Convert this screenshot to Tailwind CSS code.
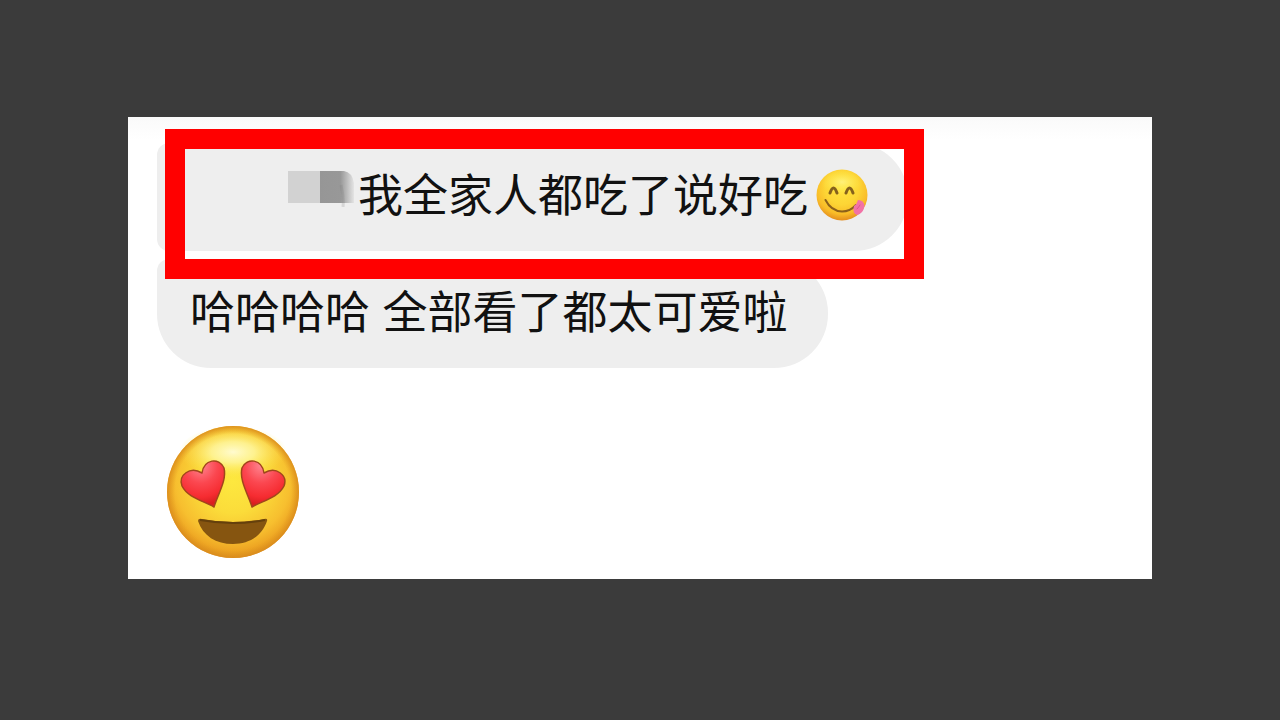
<!DOCTYPE html>
<html lang="zh">
<head>
  <meta charset="UTF-8">
  <meta name="viewport" content="width=device-width, initial-scale=1.0">
  <title>Chat</title>
  <script src="https://cdn.jsdelivr.net/npm/@tailwindcss/browser@4"></script>
</head>
<body class="bg-[#3b3b3b] min-h-screen pt-[117px] font-['Liberation_Sans','Noto_Sans_CJK_SC',sans-serif] text-[#111111]">

  <main class="w-4/5 mx-auto bg-white bg-linear-to-b from-[#fafafa] to-white to-5% pt-[26px] pb-5 pl-[29px]">

    <!-- Messages -->
    <div class="flex flex-col items-start gap-2 text-[45px] leading-[60px] whitespace-nowrap">

      <div class="relative flex items-center bg-[#eeeeee] rounded-l-xl rounded-r-[54px] h-[108px] pl-[131px] pr-10">
        <!-- Blurred name -->
        <svg class="w-[70px] h-9 mb-4" viewBox="0 0 70 36" aria-hidden="true">
          <defs>
            <linearGradient id="smudge" x1="0" x2="1">
              <stop offset="0" stop-color="#969696"/>
              <stop offset="0.6" stop-color="#989898"/>
              <stop offset="0.8" stop-color="#bdbdbd"/>
              <stop offset="1" stop-color="#e4e4e4"/>
            </linearGradient>
          </defs>
          <rect y="0" width="32" height="32" fill="#d2d2d2"/>
          <path d="M32 0h24q8 1 10 12v20H32z" fill="url(#smudge)"/>
          <path d="M53 14q3 12 2 22" fill="none" stroke="#777777" stroke-opacity="0.2" stroke-width="3"/>
        </svg>
        <p>我全家人都吃了说好吃</p>
        <svg class="w-[52px] h-[52px] ml-2 mb-1" viewBox="0 0 52 52" role="img" aria-label="😋">
          <defs>
            <radialGradient id="yum" cx="0.5" cy="0.36" r="0.66">
              <stop offset="0" stop-color="#ffe43f"/>
              <stop offset="0.5" stop-color="#fdd535"/>
              <stop offset="0.78" stop-color="#f9bc28"/>
              <stop offset="1" stop-color="#e0861c"/>
            </radialGradient>
            <radialGradient id="yumShine">
              <stop offset="0" stop-color="#fff58a" stop-opacity="0.8"/>
              <stop offset="1" stop-color="#fff04f" stop-opacity="0"/>
            </radialGradient>
          </defs>
          <circle cx="26" cy="26" r="25.5" fill="url(#yum)"/>
          <ellipse cx="26" cy="13" rx="21" ry="12" fill="url(#yumShine)"/>
          <path d="M14 24Q17.500 14 21 24M30 24Q33.500 14 37 24" fill="none" stroke="#85611c" stroke-width="3" stroke-linecap="round" stroke-linejoin="round"/>
          <path d="M9.500 31Q15 42 26 42.500Q34 42.500 40 36" fill="none" stroke="#8c601a" stroke-width="2" stroke-linecap="round"/>
          <path d="M38 37Q41 35 42 31Q48 31 48.500 37Q47 45 41 46Q36 44 38 37Z" fill="#f272a6"/>
          <path d="M41 40Q43 38 44 36" fill="none" stroke="#dd5590" stroke-width="1" stroke-linecap="round"/>
        </svg>
        <!-- Highlight frame -->
        <div class="absolute -top-3.5 -bottom-7 left-2 -right-4 border-20 border-[#ff0000]"></div>
      </div>

      <div class="flex items-center bg-[#eeeeee] rounded-tl-xl rounded-bl-[54px] rounded-r-[54px] h-[109px] pl-[33px] pr-10">
        <p>哈哈哈哈 全部看了都太可爱啦</p>
      </div>
    </div>

    <!-- Emoji message -->
    <svg class="w-[134px] h-[134px] mt-[57px] ml-[9px]" viewBox="0 0 134 134" role="img" aria-label="😍">
      <defs>
        <radialGradient id="face" cx="0.5" cy="0.42" r="0.6">
          <stop offset="0" stop-color="#fde83f"/>
          <stop offset="0.4" stop-color="#fbdc3a"/>
          <stop offset="0.72" stop-color="#f7bf2f"/>
          <stop offset="0.88" stop-color="#eda322"/>
          <stop offset="1" stop-color="#d98a1c"/>
        </radialGradient>
        <radialGradient id="shine">
          <stop offset="0" stop-color="#fffbcf"/>
          <stop offset="0.4" stop-color="#fff8a4" stop-opacity="0.8"/>
          <stop offset="1" stop-color="#fdea4a" stop-opacity="0"/>
        </radialGradient>
        <radialGradient id="rim" cx="0.5" cy="0.5" r="0.5">
          <stop offset="0.88" stop-color="#e09a1e" stop-opacity="0"/>
          <stop offset="1" stop-color="#d98a1c" stop-opacity="0.85"/>
        </radialGradient>
        <radialGradient id="heart" cx="0.45" cy="0.1" r="0.85">
          <stop offset="0" stop-color="#ff8591"/>
          <stop offset="0.45" stop-color="#fb4750"/>
          <stop offset="0.8" stop-color="#f62c31"/>
          <stop offset="1" stop-color="#d91f20"/>
        </radialGradient>
      </defs>
      <circle cx="67" cy="67" r="66" fill="url(#face)"/>
      <ellipse cx="67" cy="27" rx="54" ry="26" fill="url(#shine)"/>
      <circle cx="67" cy="67" r="66" fill="url(#rim)"/>
      <g fill="url(#heart)" stroke="#a0461b" stroke-width="1.500" stroke-linejoin="round">
        <path d="M48 82C38 76 22 73 16 61C12 50 24 41 36 48C38 34 53 32 58 43C61 55 52 69 48 82Z"/>
        <path d="M86 82C82 69 73 55 76 43C81 32 96 34 98 48C110 41 122 50 118 61C112 73 96 76 86 82Z"/>
      </g>
      <path d="M32 96Q32 93 36 94Q67 100 98 94Q102 93 101 96C96 111 83 119 67 119C50 119 37 111 32 96Z" fill="#865510"/>
      <path d="M34 95Q67 101 99 95" fill="none" stroke="#65400c" stroke-width="2"/>
    </svg>

  </main>

</body>
</html>
